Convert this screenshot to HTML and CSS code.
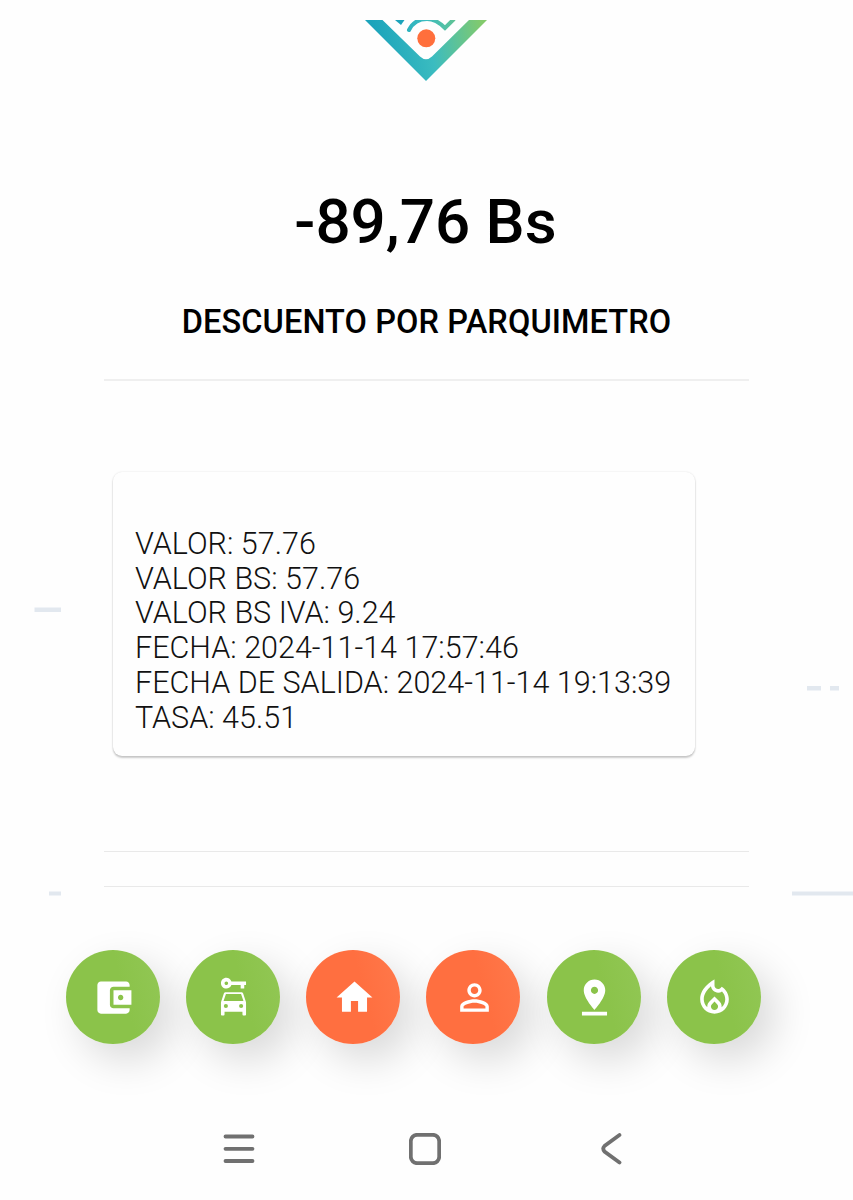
FILE: index.html
```
<!DOCTYPE html>
<html lang="es">
<head>
  <meta charset="UTF-8">
  <meta name="viewport" content="width=device-width, initial-scale=1.0">
  <title>Descuento por parquimetro</title>
  <link rel="stylesheet" href="styles.css">
</head>
<body>

  <!-- Background road marks -->
  <svg class="roadMarks" viewBox="0 0 853 1200">
    <rect x="34.5" y="607.5" width="26.5" height="4.5" />
    <rect x="49" y="891.5" width="12" height="4" />
    <rect x="807" y="686" width="14" height="4.5" />
    <rect x="830" y="686" width="9" height="4.5" />
    <rect x="792" y="891.5" width="61" height="4" />
  </svg>

  <header class="logo">
    <svg width="124" height="62" viewBox="0 0 124 62">
      <defs>
        <linearGradient id="logoColor" gradientUnits="userSpaceOnUse" x1="10" y1="20" x2="118" y2="0">
          <stop offset="0" stop-color="#1ba3bb" />
          <stop offset="0.5" stop-color="#3bbcc0" />
          <stop offset="1" stop-color="#83ca6b" />
        </linearGradient>
      </defs>
      <path fill="url(#logoColor)" d="M1 0H18.5L56 36.5Q62 42 68 36.5L105 0H123L62 61Z" />
      <path fill="#1ba3bb" d="M31 0H40.5L37 5Z" />
      <path fill="none" stroke="url(#logoColor)" stroke-width="4" stroke-linecap="round" d="M45 10C49 2 55 -1 63 -1C71 -1 76 3 81 8L89.5 -.5" />
      <circle cx="62.3" cy="18.3" r="9" fill="#ff6f3c" />
    </svg>
  </header>

  <main class="content">
    <h1 class="amount">-89,76 Bs</h1>
    <h2 class="concept">DESCUENTO POR PARQUIMETRO</h2>
    <hr>

    <div class="card">
      <div>VALOR: 57.76</div>
      <div>VALOR BS: 57.76</div>
      <div>VALOR BS IVA: 9.24</div>
      <div>FECHA: 2024-11-14 17:57:46</div>
      <div>FECHA DE SALIDA: 2024-11-14 19:13:39</div>
      <div>TASA: 45.51</div>
    </div>

    <hr>
    <hr class="lastLine">
  </main>

  <nav class="menu">
    <a class="menuBtn green">
      <svg viewBox="0 0 24 24"><path d="M21 18v1c0 1.100-.9 2-2 2H5c-1.110 0-2-.9-2-2V5c0-1.100.89-2 2-2h14c1.100 0 2 .9 2 2v1h-9c-1.110 0-2 .9-2 2v8c0 1.100.89 2 2 2h9zm-9-2h10V8H12v8zm4-2.500c-.83 0-1.500-.67-1.500-1.500s.67-1.500 1.500-1.500 1.500.67 1.500 1.500-.67 1.500-1.500 1.500z" /></svg>
    </a>
    <a class="menuBtn green">
      <svg viewBox="0 0 24 24"><path fill-rule="evenodd" d="M10.830 3C10.410 1.830 9.300 1 8 1 6.340 1 5 2.340 5 4s1.340 3 3 3c1.300 0 2.410-.84 2.830-2H16v2h2V5h1V3zM8 5c-.55 0-1-.45-1-1s.45-1 1-1 1 .45 1 1-.45 1-1 1zM16.390 9H7.610c-.43 0-.81.28-.95.69L5 14.690V21.500c0 .28.22.5.5.5h1c.28 0 .5-.22.5-.5V20h10v1.500c0 .28.22.5.5.5h1c.28 0 .5-.22.5-.5V14.690l-1.660-5C17.200 9.280 16.820 9 16.390 9zM7.780 10h8.440l1.330 4H6.450zM7.750 15.600a1.150 1.150 0 1 0 0 2.300 1.150 1.150 0 0 0 0-2.300zM16.250 15.600a1.150 1.150 0 1 0 0 2.300 1.150 1.150 0 0 0 0-2.300z" /></svg>
    </a>
    <a class="menuBtn orange">
      <svg viewBox="0 0 24 24"><path d="M10 20v-6h4v6h5v-8h3L12 3 2 12h3v8z" /></svg>
    </a>
    <a class="menuBtn orange">
      <svg viewBox="0 0 24 24"><path d="M12 5.900c1.160 0 2.100.94 2.100 2.100s-.94 2.100-2.100 2.100S9.900 9.160 9.900 8s.94-2.100 2.100-2.100m0 9c2.970 0 6.100 1.460 6.100 2.100v1.100H5.900V17c0-.64 3.130-2.100 6.100-2.100M12 4C9.790 4 8 5.790 8 8s1.790 4 4 4 4-1.790 4-4-1.790-4-4-4zm0 9c-2.670 0-8 1.340-8 4v3h16v-3c0-2.660-5.330-4-8-4z" /></svg>
    </a>
    <a class="menuBtn green">
      <svg viewBox="0 0 24 24"><path d="M18 8c0-3.310-2.690-6-6-6S6 4.690 6 8c0 4.500 6 11 6 11s6-6.500 6-11zm-8 0c0-1.100.9-2 2-2s2 .9 2 2-.89 2-2 2c-1.100 0-2-.9-2-2zM5 20v2h14v-2H5z" /></svg>
    </a>
    <a class="menuBtn green">
      <svg viewBox="0 0 24 24"><path d="M16 6l-.44.55C14.380 8.020 12 7.190 12 5.300V2S4 6 4 13c0 4.420 3.580 8 8 8s8-3.580 8-8c0-2.960-1.610-5.620-4-7zM12 19c-1.100 0-2-.87-2-1.940 0-.51.2-.99.58-1.360L12 14.300l1.430 1.400c.37.37.57.85.57 1.360 0 1.070-.9 1.940-2 1.940zM15.960 17.500c.04-.36.22-1.890-1.130-3.220L12 11.500l-2.830 2.780C7.810 15.620 8 17.160 8.040 17.500 6.790 16.400 6 14.790 6 13c0-3.160 2.130-5.650 4.030-7.250.23 1.990 1.930 3.550 3.990 3.550.78 0 1.540-.23 2.180-.66C17.340 9.780 18 11.350 18 13c0 1.790-.79 3.400-2.040 4.500z" /></svg>
    </a>
  </nav>

  <!-- Phone navigation -->
  <footer class="phoneNav">
    <svg width="32" height="32" viewBox="0 0 32 32"><path d="M2.500 3.500h27M2.500 15.800h27M2.500 28h27" /></svg>
    <svg width="32" height="32" viewBox="0 0 32 32"><rect x="1.800" y="1.800" width="28.400" height="28.400" rx="6.500" /></svg>
    <svg width="32" height="32" viewBox="0 0 32 32"><path d="M24.500 2L9.500 13Q7 15.500 9.500 18.500L24.500 29.500" /></svg>
  </footer>

</body>
</html>
```
FILE: styles.css
```
* {
  box-sizing: border-box;
}
body {
  margin: 0;
  height: 1200px;
  overflow: hidden;
  display: flex;
  flex-direction: column;
  font-family: Roboto, "Liberation Sans", sans-serif;
  background-color: #fefefe;
  color: #000;
}
.roadMarks {
  position: absolute;
  top: 0;
  left: 0;
  width: 853px;
  height: 1200px;
  fill: #e2e8ef;
  z-index: -1;
}
.logo {
  height: 82px;
  padding: 20px 0 0 364px;
}
.logo svg {
  display: block;
}
.content {
  width: 645px;
  margin-left: 104px;
}
.amount {
  margin: 104px 2px 0 0;
  font-size: 62px;
  font-weight: 500;
  line-height: 72px;
  text-align: center;
}
.concept {
  margin: 44px 0 0;
  font-size: 32.5px;
  font-weight: 500;
  line-height: 40px;
  letter-spacing: 0.1px;
  text-align: center;
}
hr {
  height: 1px;
  margin: 37px 0 0;
  border: none;
  background-color: #e9e9e9;
}
.content > .concept + hr {
  height: 2px;
  background-color: #efefef;
}
.card {
  width: 582px;
  height: 284px;
  margin: 91px 0 95px 9px;
  padding: 55px 22px 0;
  border-radius: 9px;
  background-color: #fefefe;
  box-shadow: 0 2px 2px rgba(0, 0, 0, 0.2), 0 0 2px rgba(0, 0, 0, 0.12);
  font-size: 30.53px;
  font-weight: 300;
  line-height: 34.7px;
  white-space: nowrap;
  color: #111;
}
.card + hr {
  margin-top: 0;
}
.content .lastLine {
  margin-top: 34px;
}
.menu {
  display: flex;
  gap: 26.3px;
  margin: 63px 0 0 65.5px;
}
.menuBtn {
  display: flex;
  align-items: center;
  justify-content: center;
  width: 94px;
  height: 94px;
  border-radius: 50%;
  box-shadow: 14px 16px 40px rgba(0, 0, 0, 0.15);
}
.menuBtn svg {
  width: 43px;
  height: 43px;
  margin: 1px 0 0 2px;
  fill: #fff;
}
.green {
  background: linear-gradient(75deg, #8bc34a 60%, #92c755);
}
.orange {
  background: linear-gradient(75deg, #ff6f40 60%, #ff794b);
}
.phoneNav {
  display: flex;
  gap: 154px;
  margin: 88.5px 0 0 223px;
}
.phoneNav svg {
  fill: none;
  stroke: #707070;
  stroke-width: 3.8;
  stroke-linecap: round;
}
```
